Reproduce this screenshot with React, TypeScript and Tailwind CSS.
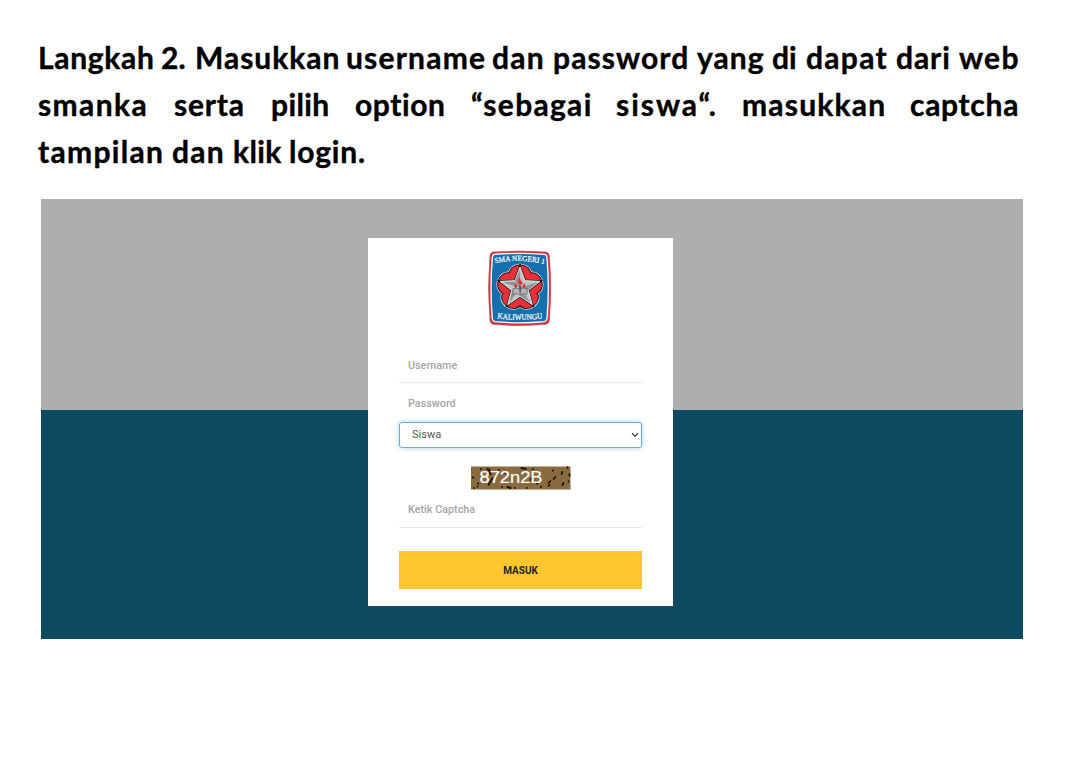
import React, { useState } from 'react';

interface Word {
  text: string;
  className: string;
}

const lines: Word[][] = [
  [
    { text: 'Langkah', className: 'w-[123px] tracking-[0.7px]' },
    { text: '2.', className: 'w-[34px]' },
    { text: 'Masukkan', className: 'w-[151px] tracking-[1px]' },
    { text: 'username', className: 'w-[146px] tracking-[1.2px]' },
    { text: 'dan', className: 'w-[61px] tracking-[1.3px]' },
    { text: 'password', className: 'w-[144px] tracking-[1.1px]' },
    { text: 'yang', className: 'w-[75px] tracking-[1px]' },
    { text: 'di', className: 'w-[34px]' },
    { text: 'dapat', className: 'w-[90px] tracking-[1.3px]' },
    { text: 'dari', className: 'w-[63px] tracking-[0.9px]' },
    { text: 'web', className: 'w-[62px] tracking-[1.3px]' },
  ],
  [
    { text: 'smanka', className: 'w-[136px] tracking-[1.4px]' },
    { text: 'serta', className: 'w-[97px] tracking-[0.8px]' },
    { text: 'pilih', className: 'w-[84px] tracking-[0.4px]' },
    { text: 'option', className: 'w-[116px] tracking-[0.6px]' },
    { text: '“sebagai', className: 'w-[145px] tracking-[1.3px]' },
    { text: 'siswa“.', className: 'w-[126px] tracking-[2px]' },
    { text: 'masukkan', className: 'w-[168px] tracking-[1.2px]' },
    { text: 'captcha', className: 'w-[111px] tracking-[0.7px]' },
  ],
  [
    { text: 'tampilan', className: 'w-[134px] tracking-[1.3px]' },
    { text: 'dan', className: 'w-[61px] tracking-[1.3px]' },
    { text: 'klik', className: 'w-[56px] tracking-[0.4px]' },
    { text: 'login.', className: 'w-[80px] tracking-[0.8px]' },
  ],
];

const petals = [0, 72, 144, 216, 288];

const Flower = ({ grow, fill }: { grow: number; fill: string }) => (
  <g fill={fill}>
    {petals.map(a => (
      <ellipse key={a} cx="120" cy="87" rx={30 + grow} ry={25 + grow} transform={`rotate(${a} 120 128)`} />
    ))}
  </g>
);

const SchoolLogo = () => (
  <svg viewBox="24 15 189 228" className="h-[76px] w-[63px]" aria-label="SMA Negeri 1 Kaliwungu">
    <path d="M38 21 Q120 15 199 21 Q207 23 208 32 Q217 130 208 227 Q206 236 198 238 Q120 246 39 238 Q31 236 30 227 Q21 130 30 32 Q31 23 38 21Z" fill="#db2f38" stroke="#b05a66" strokeWidth="2" />
    <path d="M42 28 Q120 22 195 28 Q200 30 201 38 Q209 130 201 221 Q199 228 193 230 Q120 237 44 230 Q38 228 37 221 Q29 130 37 38 Q38 30 42 28Z" fill="#1670ad" stroke="#fff" strokeWidth="4" />
    {/* five-petal flower */}
    <Flower grow={6} fill="#f4f4f4" />
    <Flower grow={4} fill="#181212" />
    <Flower grow={1} fill="#e9303a" />
    <circle cx="120" cy="128" r="44" fill="#e9303a" />
    <path d="M120 66 L135 107 L180 109 L145 136 L157 179 L120 154 L83 179 L95 136 L60 109 L105 107Z" fill="#b9bcbd" stroke="#181212" strokeWidth="7" />
    <path d="M120 66 L135 107 L180 109 L145 136 L157 179 L120 154 L83 179 L95 136 L60 109 L105 107Z" fill="#c3c6c7" stroke="#e2e2e2" strokeWidth="3" />
    <path d="M120 74 V128 L105 108Z M120 128 L172 112 L145 136Z M120 128 L152 173 L120 152Z M120 128 L88 173 L97 136Z M120 128 L68 112 L104 110Z" fill="#909496" />
    <path d="M99 131 Q111 126 120 133 Q129 126 141 131 V148 Q129 144 120 150 Q111 144 99 148Z" fill="#b3b6b8" stroke="#55585c" strokeWidth="2" />
    <path d="M117 122 H124 L122 146 H119Z" fill="#55585c" />
    <path d="M120 121 Q108 113 120 97 Q120 108 127 111 Q130 119 120 121Z M106 130 Q99 122 107 114 Q108 121 113 124Z M132 130 Q139 123 134 114 Q130 121 126 124Z" fill="#e22f36" />
    <path id="logo-top" d="M45 55 Q120 39 196 58" fill="none" />
    <text fill="#fff" stroke="#fff" strokeWidth="0.6" fontFamily="Liberation Serif, serif" fontSize="23">
      <textPath href="#logo-top" textLength="149" lengthAdjust="spacingAndGlyphs">SMA NEGERI 1</textPath>
    </text>
    <path id="logo-bottom" d="M52 220 Q120 229 190 220" fill="none" />
    <text fill="#fff" stroke="#fff" strokeWidth="0.6" fontFamily="Liberation Serif, serif" fontSize="24">
      <textPath href="#logo-bottom" textLength="136" lengthAdjust="spacingAndGlyphs">KALIWUNGU</textPath>
    </text>
  </svg>
);

const Captcha = () => (
  <svg viewBox="0.5 0 100 24" className="mx-auto block h-6 w-[100px]">
    <rect x="0.5" y="0.5" width="99.5" height="23" fill="#8a6b3f" />
    <g stroke="#17120b" strokeLinecap="round" fill="none">
      <path d="M51 2 l4 1 M17 3 l2 1 M37 21 l3 1 M19 5 l1 3" strokeWidth="2.2" />
      <path d="M22 12 l-4 7 M62 11 l-2 3 M78 17 l2 -2 M83 13 l2 -2 M78 20 l1 -1 M92 6 l-1 2 M97 1 v1 M99 8 v2 M93 17 l-1 2" strokeWidth="1.7" />
      <path d="M2 11 l1 1 M7 17 l1 1 M7 20 v1 M10 3 h1 M28 4 h1 M34 7 h1 M44 22 h1 M62 3 h1 M82 5 l1 -1 M31 21 h1 M56 22 h1 M66 17 l1 1 M70 21 h1 M3 22 h1 M98 15 v1" strokeWidth="1.3" />
    </g>
    <text x="9" y="17" textLength="63" lengthAdjust="spacingAndGlyphs" fill="#fff" stroke="#fff" strokeWidth="0.2" fontFamily="Liberation Sans, sans-serif" fontSize="16">872n2B</text>
  </svg>
);

const LoginCard = () => {
  const [role, setRole] = useState('siswa');

  return (
    <form className="h-[368px] w-[305px] bg-white px-[31px] pt-3" onSubmit={e => e.preventDefault()}>
      <div className="flex h-[96px] justify-center pr-[2px]">
        <SchoolLogo />
      </div>
      <input
        placeholder="Username"
        className="block h-[37px] w-full border-b border-[#ebebeb] px-[9px] pt-0.5 text-[10.8px] font-medium outline-none placeholder:text-[#a5a5a5]"
      />
      <input
        type="password"
        placeholder="Password"
        className="block h-[39px] w-full px-[9px] pt-px text-[10.8px] font-medium outline-none placeholder:text-[#a5a5a5]"
      />
      <div className="relative">
        <select
          value={role}
          onChange={e => setRole(e.target.value)}
          className="block h-[26px] w-full appearance-none rounded-[3px] border border-[#66afe9] bg-white px-3 text-[11px] text-[#555] shadow-[0_0_5px_rgba(102,175,233,0.6)] outline-none"
        >
          <option value="siswa">Siswa</option>
        </select>
        <svg viewBox="0 0 8 6" className="pointer-events-none absolute right-[3px] top-[10px] h-[6px] w-2">
          <path d="M1 1.2 L4 4.3 L7 1.2" fill="none" stroke="#333" strokeWidth="1.2" />
        </svg>
      </div>
      <div className="pt-[18px]">
        <Captcha />
      </div>
      <input
        placeholder="Ketik Captcha"
        className="block h-[38px] w-full border-b border-[#ebebeb] px-[9px] pt-0.5 text-[10.8px] font-medium outline-none placeholder:text-[#a5a5a5]"
      />
      <button className="mt-[23px] block h-[38px] w-full bg-[#ffc62f] text-[10px] font-bold text-[#1b2534]">
        MASUK
      </button>
    </form>
  );
};

const App: React.FC = () => (
  <div className="h-[759px] w-[1067px] overflow-hidden bg-white px-[38px] pt-[34px]">
    <div className="font-[Lato,sans-serif] text-[30px] font-bold leading-[47px] text-black [-webkit-text-stroke:0.4px_black]">
      {lines.map((words, i) => (
        <p key={i} className="flex whitespace-nowrap">
          {words.map((word, j) => (
            <span key={j} className={`shrink-0 ${word.className}`}>{word.text}</span>
          ))}
        </p>
      ))}
    </div>
    <div className="ml-[3px] mt-6 flex h-[440px] w-[982px] justify-center bg-[linear-gradient(#adaeb0_211px,#0d4b63_211px)] pr-[23px] pt-[39px] font-[Roboto,sans-serif]">
      <LoginCard />
    </div>
  </div>
);

export default App;
